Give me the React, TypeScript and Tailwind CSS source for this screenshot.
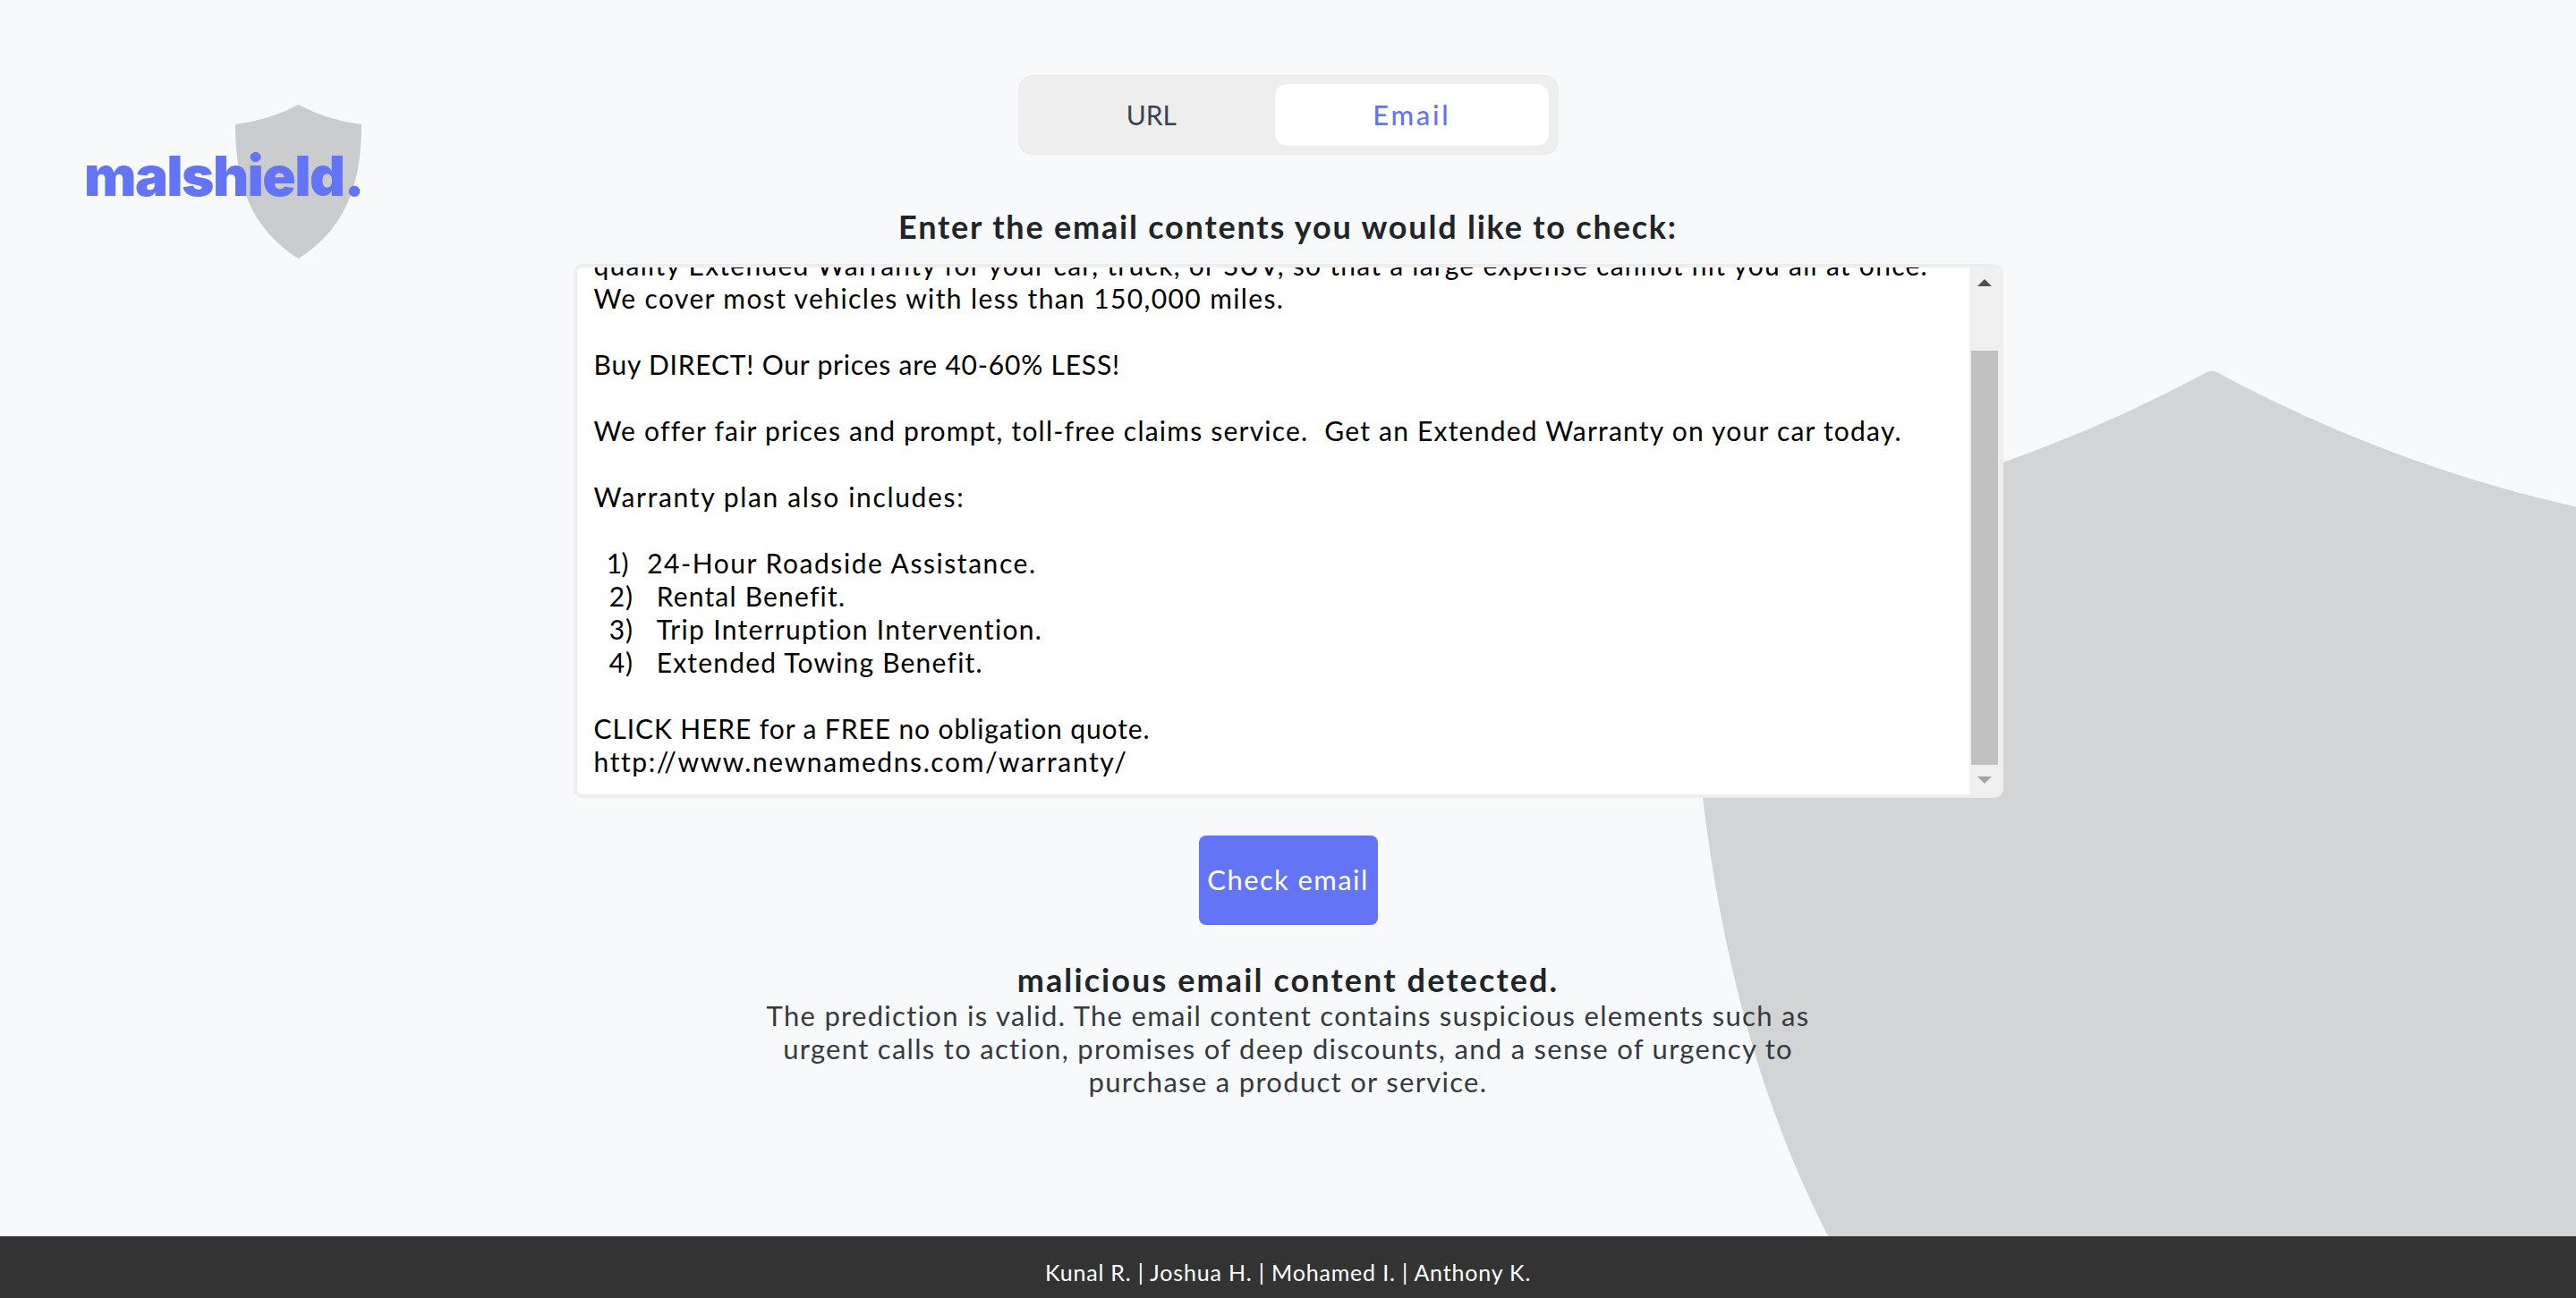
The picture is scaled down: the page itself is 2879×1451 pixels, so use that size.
const FONT = "font-['Lato',sans-serif]";

function Shield({ className, fill }: { className: string; fill: string }) {
  return (
    <svg viewBox="0 0 141 172" className={className} fill={fill}>
      <path d="M69.8 0.35 Q70.5 0 71.2 0.35 Q104 18 141 22 C141 90 123 138 71.4 171.5 Q70.5 172 69.6 171.5 C18 138 0 90 0 22 Q37 18 69.8 0.35 Z" />
    </svg>
  );
}

const LINES: { prefix?: string; prefixClass?: string; text: string; cls: string }[] = [
  { text: "quality Extended Warranty for your car, truck, or SUV, so that a large expense cannot hit you all at once.", cls: "tracking-[1.27px]" },
  { text: "We cover most vehicles with less than 150,000 miles.", cls: "tracking-[1.38px]" },
  { text: "", cls: "" },
  { text: "Buy DIRECT! Our prices are 40-60% LESS!", cls: "tracking-[0.8px]" },
  { text: "", cls: "" },
  { text: "We offer fair prices and prompt, toll-free claims service.  Get an Extended Warranty on your car today.", cls: "tracking-[1.22px]" },
  { text: "", cls: "" },
  { text: "Warranty plan also includes:", cls: "tracking-[1.65px]" },
  { text: "", cls: "" },
  { prefix: "  1)   ", prefixClass: "tracking-[-0.6px]", text: "24-Hour Roadside Assistance.", cls: "tracking-[1.55px]" },
  { prefix: "  2)   ", prefixClass: "tracking-[0.9px]", text: "Rental Benefit.", cls: "tracking-[1.2px]" },
  { prefix: "  3)   ", prefixClass: "tracking-[0.9px]", text: "Trip Interruption Intervention.", cls: "tracking-[1.3px]" },
  { prefix: "  4)   ", prefixClass: "tracking-[0.9px]", text: "Extended Towing Benefit.", cls: "tracking-[1.2px]" },
  { text: "", cls: "" },
  { text: "CLICK HERE for a FREE no obligation quote.", cls: "tracking-[0.9px]" },
  { text: "http://www.newnamedns.com/warranty/", cls: "tracking-[1.6px]" },
];

export default function App() {
  return (
    <div className={`${FONT} relative flex h-[1451px] w-full flex-col overflow-hidden bg-[#f8f9fb]`}>
      <main className="relative grid min-h-0 flex-1 grid-cols-[1fr_1598px_1fr]">
        <Shield className="absolute left-[1887px] top-[413px] h-[1428px] w-[1170px]" fill="#d3d4d6" />

        <div className="relative pl-[97px] pt-[117px]">
          <div className="relative h-[172px] w-[307px]">
            <Shield className="absolute left-[166px] top-0 h-[172px] w-[141px]" fill="#cbccce" />
            <span className="absolute -left-[3px] top-[44px] font-['Inter',sans-serif] text-[62px] font-black leading-[72px] tracking-[-1.6px] text-[#6474f7]">
              malshield.
            </span>
          </div>
        </div>

        <div className="relative flex flex-col items-center pt-[84px]">
          <div className="flex h-[89px] w-[604px] items-center rounded-[16px] border border-[#e9eaeb] bg-[#eeeeee] px-[10px]">
            <div className="flex h-[69px] w-[277px] items-center justify-center text-[30px] text-[#3a4252]">URL</div>
            <div className="flex h-[69px] w-[306px] items-center justify-center rounded-[14px] bg-white text-[31px] font-medium tracking-[2.7px] text-[#6474f7]">
              Email
            </div>
          </div>

          <h1 className="mt-[58px] text-[36px] font-bold leading-[44px] tracking-[1.8px] text-[#212529]">
            Enter the email contents you would like to check:
          </h1>

          <div className="mt-[20px] flex h-[597px] w-full overflow-hidden rounded-[10px] border-[4px] border-[#eeeeee] bg-white">
            <div className="min-w-0 flex-1 overflow-hidden pl-[19px] text-[30px] leading-[37px] text-black">
              <div className="-mt-[21px] whitespace-pre">
                {LINES.map((l, i) => (
                  <div key={i} className="h-[37px]">
                    {l.prefix ? <span className={l.prefixClass}>{l.prefix}</span> : null}
                    <span className={l.cls}>{l.text}</span>
                  </div>
                ))}
              </div>
            </div>
            <div className="flex w-[34px] shrink-0 flex-col items-center bg-[#f0f0f0]">
              <div className="mt-[13px] h-0 w-0 border-x-[8px] border-b-[8px] border-x-transparent border-b-[#505050]" />
              <div className="mt-[72px] h-[463px] w-[30px] bg-[#c1c1c1]" />
              <div className="mt-[13px] h-0 w-0 border-x-[8px] border-t-[8px] border-x-transparent border-t-[#a3a3a3]" />
            </div>
          </div>

          <button className="mt-[42px] h-[100px] w-[200px] rounded-[8px] bg-[#6474f7] pb-[2px] text-[31px] tracking-[1.4px] text-white">
            Check email
          </button>

          <h2 className="mt-[39px] text-[36px] font-bold leading-[44px] tracking-[2.1px] text-[#212529]">malicious email content detected.</h2>
          <p className="w-[1200px] text-center text-[31px] leading-[37px] tracking-[1.3px] text-[#343a40]">
            The prediction is valid. The email content contains suspicious elements such as urgent calls to action, promises of deep discounts, and a sense of urgency to purchase a product or service.
          </p>
        </div>
        <div />
      </main>
      <footer className="relative flex h-[69px] shrink-0 items-center justify-center bg-[#333333] pt-[12px] text-[25px] tracking-[0.82px] text-white">
        Kunal R. | Joshua H. | Mohamed I. | Anthony K.
      </footer>
    </div>
  );
}
